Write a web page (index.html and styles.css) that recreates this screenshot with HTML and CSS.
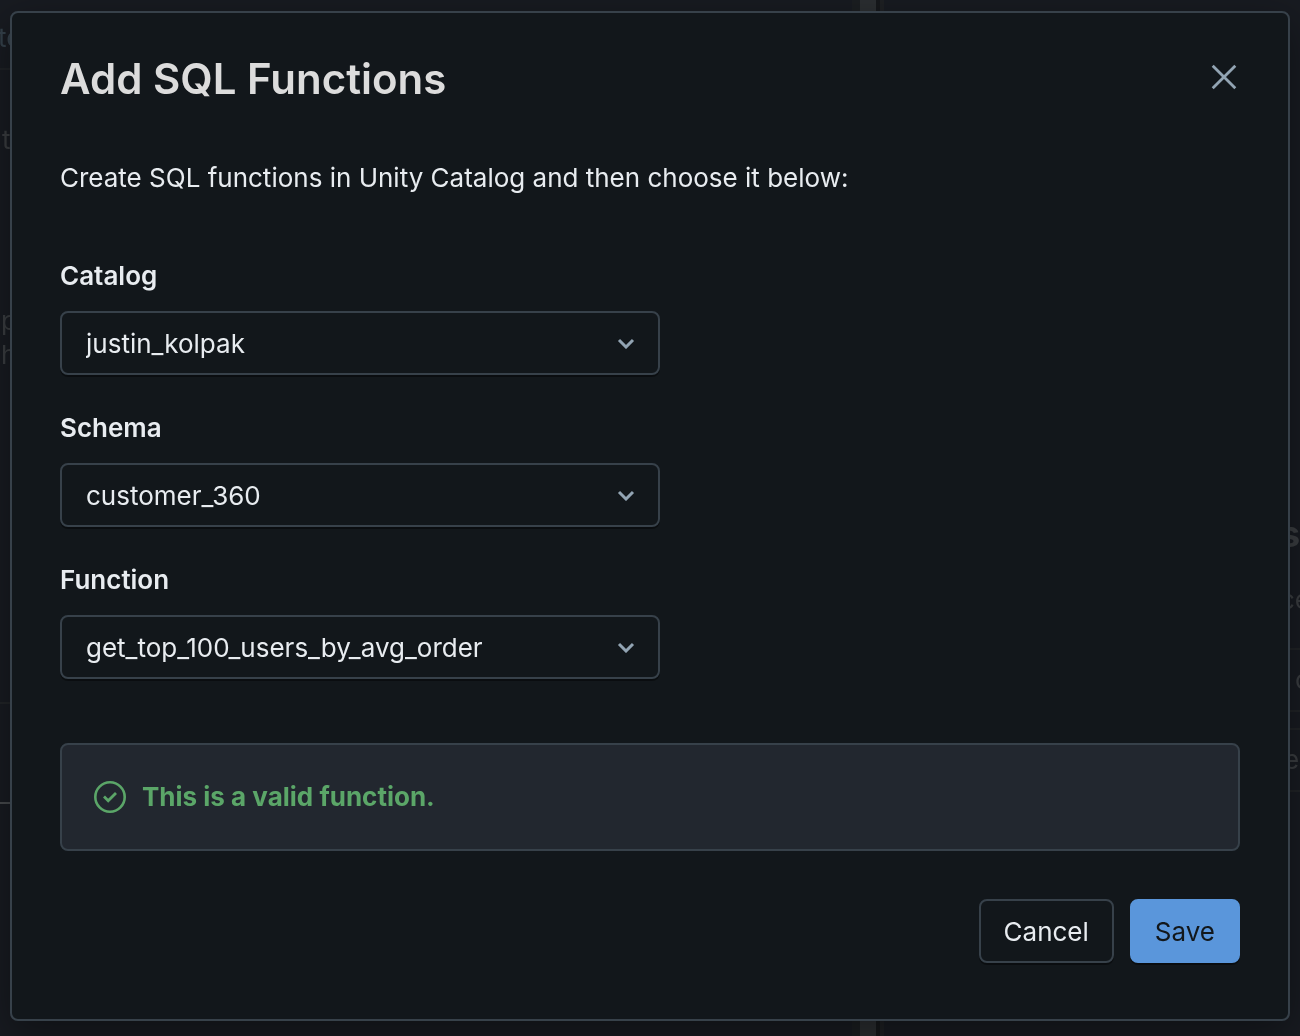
FILE: index.html
```html
<!DOCTYPE html>
<html lang="en">
<head>
<meta charset="utf-8">
<meta name="viewport" content="width=device-width, initial-scale=1">
<title>Add SQL Functions</title>
<link rel="stylesheet" href="styles.css">
</head>
<body>
<div class="workspace" aria-hidden="true">
  <div class="pane">
    <div class="pane-head">te</div>
    <div class="pane-hint">t</div>
    <div class="pane-copy">p<br>h</div>
    <div class="pane-rule"></div>
    <div class="pane-rule strong"></div>
  </div>
  <div class="splitter"></div>
  <div class="pane side">
    <div class="side-title">st</div>
    <div class="side-sub">ce</div>
    <div class="side-row late">c</div>
    <div class="side-row">e</div>
  </div>
</div>

<section class="modal" role="dialog" aria-modal="true" aria-labelledby="modal-title">
  <header class="modal-head">
    <h1 class="modal-title" id="modal-title">Add SQL Functions</h1>
    <button class="close" type="button" aria-label="Close">
      <svg width="32" height="32" viewBox="0 0 32 32" fill="none" stroke="currentColor" stroke-width="2.8"><path d="M4.7 4.7 27.3 27.3M27.3 4.7 4.7 27.3"/></svg>
    </button>
  </header>

  <p class="intro">Create SQL functions in Unity Catalog and then choose it below:</p>

  <form class="fields" id="function-form">
    <div class="field">
      <label class="label" for="catalog">Catalog</label>
      <div class="picker">
        <select class="select" id="catalog"><option>justin_kolpak</option></select>
        <svg class="chevron" width="20" height="12" viewBox="0 0 20 12" fill="none" stroke="currentColor" stroke-width="3"><path d="M3 3 10 10 17 3"/></svg>
      </div>
    </div>
    <div class="field">
      <label class="label" for="schema">Schema</label>
      <div class="picker">
        <select class="select" id="schema"><option>customer_360</option></select>
        <svg class="chevron" width="20" height="12" viewBox="0 0 20 12" fill="none" stroke="currentColor" stroke-width="3"><path d="M3 3 10 10 17 3"/></svg>
      </div>
    </div>
    <div class="field">
      <label class="label" for="function">Function</label>
      <div class="picker">
        <select class="select" id="function"><option>get_top_100_users_by_avg_order</option></select>
        <svg class="chevron" width="20" height="12" viewBox="0 0 20 12" fill="none" stroke="currentColor" stroke-width="3"><path d="M3 3 10 10 17 3"/></svg>
      </div>
    </div>
  </form>

  <div class="status" role="status">
    <svg width="32" height="32" viewBox="0 0 32 32" fill="none" stroke="currentColor"><circle cx="16" cy="16" r="14.7" stroke-width="2.6"/><path d="M10 15.6 14.2 19.8 22 12" stroke-width="2.8"/></svg>
    <span>This is a valid function.</span>
  </div>

  <footer class="actions">
    <button class="button" type="button">Cancel</button>
    <button class="button primary" type="submit" form="function-form">Save</button>
  </footer>
</section>
</body>
</html>
```
FILE: styles.css
```css
* {
  box-sizing: border-box;
}

body {
  margin: 0;
  padding: 11px 10px 15px;
  background: #181b21;
  color: #e8ecf0;
  font: 400 26px/40px Inter, "Liberation Sans", sans-serif;
}

/* Dimmed page behind the dialog */
.workspace {
  position: fixed;
  inset: 0;
  display: grid;
  grid-template-columns: minmax(0, 852fr) 32px minmax(0, 416fr);
  overflow: hidden;
  color: #3a3d40;
}

.pane-head {
  height: 70px;
  padding-top: 18px;
  border-bottom: 2px solid #1f2226;
  color: #34404a;
  text-indent: -2px;
}

.pane-hint {
  padding: 50px 2px 0;
}

.pane-copy {
  padding: 144px 0 330px 1px;
  line-height: 34px;
}

.pane-rule {
  height: 100px;
  border-top: 2px solid #212427;
}

.pane-rule.strong {
  border-color: #46494c;
}

.splitter {
  background: linear-gradient(to right, #1b1e21 8px, #2b2e31 8px 24px, #16181b 24px 28px, #1e2023 28px);
}

.side {
  display: flex;
  flex-direction: column;
  align-items: flex-end;
  padding-top: 510px;
}

.side-title {
  width: 20px;
  font-size: 36px;
  font-weight: 700;
  line-height: 48px;
}

.side-sub {
  width: 20px;
  height: 90px;
  padding-top: 22px;
}

.side-row {
  width: 100%;
  height: 64px;
  margin-bottom: 16px;
  padding: 10px 0 0 400px;
  border: solid #202326;
  border-width: 2px 0;
}

.side-row.late {
  padding-left: 411px;
}

/* Dialog */
.modal {
  position: relative;
  padding: 38px 48px 56px;
  border: 2px solid #37414a;
  border-radius: 8px;
  background: #12171b;
  box-shadow: 0 12px 40px rgba(0, 0, 0, 0.4);
}

.modal-head {
  display: flex;
  align-items: center;
  justify-content: space-between;
}

.modal-title {
  margin: 0;
  color: #dcdcdc;
  font-size: 42px;
  font-weight: 600;
  line-height: 56px;
}

.close {
  display: flex;
  margin-bottom: 4px;
  padding: 0;
  border: 0;
  background: none;
  color: #92a4b3;
}

.intro {
  margin: 51px 0 58px;
}

.fields {
  display: grid;
  gap: 33px;
}

.field {
  display: grid;
  gap: 15px;
}

.label {
  font-weight: 600;
}

.picker {
  display: grid;
  width: 600px;
  max-width: 100%;
  align-items: center;
}

.select,
.chevron {
  grid-area: 1 / 1;
}

.chevron {
  justify-self: end;
  margin-right: 24px;
  color: #92a4b3;
  pointer-events: none;
}

.select,
.button {
  height: 64px;
  padding: 2px 24px 0;
  border: 2px solid #37414a;
  border-radius: 8px;
  background: #12171b;
  box-shadow: 0 2px 0 rgba(0, 0, 0, 0.4);
  color: #e8ecf0;
  font: inherit;
}

.select {
  width: 100%;
  appearance: none;
}

.status {
  display: flex;
  align-items: center;
  gap: 16px;
  margin: 64px 0 48px;
  padding: 32px;
  border: 2px solid #37414a;
  border-radius: 8px;
  background: #22272f;
  color: #5ba668;
  font-weight: 700;
}

.actions {
  display: flex;
  justify-content: flex-end;
  gap: 16px;
}

.button {
  padding: 2px 23px 0;
}

.button.primary {
  border-color: #5a96db;
  background: #5a96db;
  color: #12171b;
}
```
